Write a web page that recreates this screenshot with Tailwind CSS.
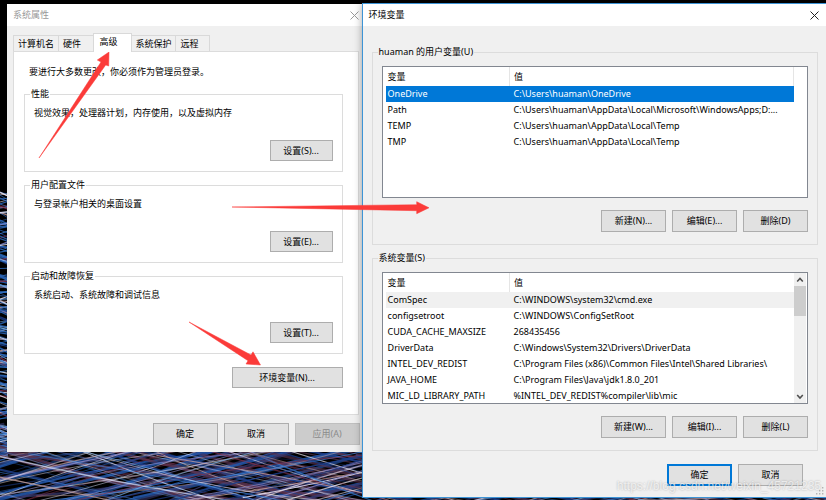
<!DOCTYPE html>
<html lang="zh-CN">
<head>
  <meta charset="UTF-8" />
  <meta name="viewport" content="width=device-width, initial-scale=1.0"/>
  <script src="https://cdn.jsdelivr.net/npm/@tailwindcss/browser@4"></script>
  <style>
    body {
      font-family: 'Noto Sans', 'Noto Sans CJK SC', sans-serif;
    }
  </style>
  <title>环境变量</title>
</head>
<body class="bg-black text-black text-[9px] leading-[14px]">
  <div class="relative min-h-screen overflow-hidden">
    <!-- ============================ WALLPAPER ============================ -->
    <svg id="wallpaper" class="absolute inset-0 h-full w-full" viewBox="0 0 826 500" preserveAspectRatio="none" fill="none" aria-hidden="true"></svg>

    <main class="relative flex items-start pt-[3px] pl-[7px]">
      <!-- ============================ SYSTEM PROPERTIES ============================ -->
      <section class="mt-px min-w-0 flex-[355] bg-[#f0f0f0]">
        <header class="flex h-[22px] items-center justify-between bg-white pr-[3px] pl-[6px] text-[#999]">
          <h1>系统属性</h1>
          <button aria-label="关闭系统属性">
            <svg class="h-[9px] w-[9px]" viewBox="0 0 9 9" fill="none" stroke="#999"><path d="M.5 .5l8 8M8.5 .5l-8 8"/></svg>
          </button>
        </header>
        <div class="pt-[7px] pr-[3px] pl-[6px]">
          <nav class="flex h-[18px] items-end">
            <button class="h-4 w-[46px] border border-b-0 border-[#d9d9d9]">计算机名</button>
            <button class="h-4 w-[34px] border-t border-[#d9d9d9] pr-2">硬件</button>
            <button class="z-10 -mb-px h-[19px] w-[39px] border border-b-0 border-[#d9d9d9] bg-white pr-2 pb-[2px]">高级</button>
            <button class="h-4 w-[44px] border-t border-r border-[#d9d9d9]">系统保护</button>
            <button class="h-4 w-[34px] border border-b-0 border-l-0 border-[#d9d9d9] pr-[6px]">远程</button>
          </nav>
          <div class="flex flex-col gap-[6px] border border-[#dcdcdc] bg-white pt-[13px] pr-[15px] pb-[26px] pl-[10px]">
            <p class="mb-[2px] pl-[5px]">要进行大多数更改，你必须作为管理员登录。</p>
            <fieldset class="border border-[#dcdcdc] px-[9px] pb-[10px]">
              <legend class="-ml-1 px-px">性能</legend>
              <p class="pt-[5px]">视觉效果，处理器计划，内存使用，以及虚拟内存</p>
              <div class="mt-5 flex justify-end">
                <button class="h-[21px] w-[63px] border border-[#adadad] bg-[#e1e1e1]">设置(S)...</button>
              </div>
            </fieldset>
            <fieldset class="border border-[#dcdcdc] px-[9px] pb-[10px]">
              <legend class="-ml-1 px-px">用户配置文件</legend>
              <p class="pt-[5px]">与登录帐户相关的桌面设置</p>
              <div class="mt-5 flex justify-end">
                <button class="h-[21px] w-[63px] border border-[#adadad] bg-[#e1e1e1]">设置(E)...</button>
              </div>
            </fieldset>
            <fieldset class="border border-[#dcdcdc] px-[9px] pb-[10px]">
              <legend class="-ml-1 px-px">启动和故障恢复</legend>
              <p class="pt-[5px]">系统启动、系统故障和调试信息</p>
              <div class="mt-5 flex justify-end">
                <button class="h-[21px] w-[63px] border border-[#adadad] bg-[#e1e1e1]">设置(T)...</button>
              </div>
            </fieldset>
            <button class="mt-[7px] h-[21px] w-[111px] self-end border border-[#adadad] bg-[#e1e1e1]">环境变量(N)...</button>
          </div>
        </div>
        <footer class="flex justify-end gap-[6px] pt-[8px] pr-[2px] pb-[7px]">
          <button class="h-[22px] w-[65px] border border-[#adadad] bg-[#e1e1e1]">确定</button>
          <button class="h-[22px] w-[65px] border border-[#adadad] bg-[#e1e1e1]">取消</button>
          <button class="h-[22px] w-[65px] border border-[#bfbfbf] bg-[#ccc] text-[#8a8a8a]" disabled>应用(A)</button>
        </footer>
      </section>

      <!-- ============================ ENVIRONMENT VARIABLES ============================ -->
      <section class="relative min-w-0 flex-[464] border border-r-0 border-[#3d94d6] bg-[#f0f0f0] shadow-[0_0_8px_rgba(0,0,0,0.35)]">
        <header class="flex h-[22px] items-center justify-between bg-white pr-[7px] pl-[6px]">
          <h1>环境变量</h1>
          <button aria-label="关闭环境变量">
            <svg class="h-[9px] w-[9px]" viewBox="0 0 9 9" fill="none" stroke="#222"><path d="M.5 .5l8 8M8.5 .5l-8 8"/></svg>
          </button>
        </header>
        <div class="flex flex-col gap-[6px] pt-[19px] pr-2 pl-[9px]">
          <fieldset class="min-w-0 border border-[#dcdcdc] px-[9px] pb-3">
            <legend class="-ml-1 px-px">huaman 的用户变量(U)</legend>
            <div class="mt-[7px] flex h-[132px] overflow-hidden border border-[#828790] bg-white pr-[13px] pl-[3px]">
              <table class="h-fit w-full table-fixed border-collapse text-left">
                <thead>
                  <tr class="h-[19px]">
                    <th class="w-[124px] border-r border-[#e5e5e5] pl-[2px] font-normal">变量</th>
                    <th class="border-r border-[#e5e5e5] pl-1 font-normal">值</th>
                  </tr>
                </thead>
                <tbody>
                  <tr class="h-4 bg-[#0078d7] text-white"><td class="p-0 pl-[2px]">OneDrive</td><td class="p-0 pl-1">C:\Users\huaman\OneDrive</td></tr>
                  <tr class="h-4"><td class="p-0 pl-[2px]">Path</td><td class="p-0 pl-1 whitespace-nowrap">C:\Users\huaman\AppData\Local\Microsoft\WindowsApps;D:...</td></tr>
                  <tr class="h-4"><td class="p-0 pl-[2px]">TEMP</td><td class="p-0 pl-1">C:\Users\huaman\AppData\Local\Temp</td></tr>
                  <tr class="h-4"><td class="p-0 pl-[2px]">TMP</td><td class="p-0 pl-1">C:\Users\huaman\AppData\Local\Temp</td></tr>
                </tbody>
              </table>
            </div>
            <div class="mt-3 flex justify-end gap-[6px]">
              <button class="h-[22px] w-[65px] border border-[#adadad] bg-[#e1e1e1]">新建(N)...</button>
              <button class="h-[22px] w-[65px] border border-[#adadad] bg-[#e1e1e1]">编辑(E)...</button>
              <button class="h-[22px] w-[65px] border border-[#adadad] bg-[#e1e1e1]">删除(D)</button>
            </div>
          </fieldset>
          <fieldset class="min-w-0 border border-[#dcdcdc] px-[9px] pb-3">
            <legend class="-ml-1 px-px">系统变量(S)</legend>
            <div class="mt-[7px] flex h-[132px] overflow-hidden border border-[#828790] bg-white pr-px pl-[3px]">
              <table class="h-fit min-w-0 flex-1 table-fixed border-collapse text-left">
                <thead>
                  <tr class="h-[19px]">
                    <th class="w-[124px] border-r border-[#e5e5e5] pl-[2px] font-normal">变量</th>
                    <th class="pl-1 font-normal">值</th>
                  </tr>
                </thead>
                <tbody>
                  <tr class="h-4 bg-[#f0f0f0]"><td class="p-0 pl-[2px]">ComSpec</td><td class="p-0 pl-1">C:\WINDOWS\system32\cmd.exe</td></tr>
                  <tr class="h-4"><td class="p-0 pl-[2px]">configsetroot</td><td class="p-0 pl-1">C:\WINDOWS\ConfigSetRoot</td></tr>
                  <tr class="h-4"><td class="p-0 pl-[2px]">CUDA_CACHE_MAXSIZE</td><td class="p-0 pl-1">268435456</td></tr>
                  <tr class="h-4"><td class="p-0 pl-[2px]">DriverData</td><td class="p-0 pl-1">C:\Windows\System32\Drivers\DriverData</td></tr>
                  <tr class="h-4"><td class="p-0 pl-[2px]">INTEL_DEV_REDIST</td><td class="p-0 pl-1 whitespace-nowrap">C:\Program Files (x86)\Common Files\Intel\Shared Libraries\</td></tr>
                  <tr class="h-4"><td class="p-0 pl-[2px]">JAVA_HOME</td><td class="p-0 pl-1">C:\Program Files\Java\jdk1.8.0_201</td></tr>
                  <tr class="h-4"><td class="p-0 pl-[2px]">MIC_LD_LIBRARY_PATH</td><td class="p-0 pl-1">%INTEL_DEV_REDIST%compiler\lib\mic</td></tr>
                </tbody>
              </table>
              <div class="flex w-3 flex-col items-center bg-[#f0f0f0]">
                <svg class="h-[13px] w-3" viewBox="0 0 12 13" fill="none" stroke="#505050" stroke-width="1.6"><path d="M3.2 8.5L6 5.5l2.8 3"/></svg>
                <div class="h-[30px] w-full bg-[#cdcdcd]"></div>
                <svg class="mt-auto h-[13px] w-3" viewBox="0 0 12 13" fill="none" stroke="#505050" stroke-width="1.6"><path d="M3.2 5L6 8l2.8-3"/></svg>
              </div>
            </div>
            <div class="mt-3 flex justify-end gap-[6px]">
              <button class="h-[22px] w-[65px] border border-[#adadad] bg-[#e1e1e1]">新建(W)...</button>
              <button class="h-[22px] w-[65px] border border-[#adadad] bg-[#e1e1e1]">编辑(I)...</button>
              <button class="h-[22px] w-[65px] border border-[#adadad] bg-[#e1e1e1]">删除(L)</button>
            </div>
          </fieldset>
        </div>
        <footer class="flex justify-end gap-[6px] pt-[13px] pr-[23px] pb-[11px]">
          <button class="h-[22px] w-[65px] border-2 border-[#0078d7] bg-[#e1e1e1]">确定</button>
          <button class="h-[22px] w-[65px] border border-[#adadad] bg-[#e1e1e1]">取消</button>
        </footer>
        <svg class="absolute right-[2px] bottom-[2px] h-2 w-2" viewBox="0 0 8 8" fill="#b4b4b4" aria-hidden="true">
          <path d="M6 0h1.4v1.4H6zM3 3h1.4v1.4H3zM6 3h1.4v1.4H6zM0 6h1.4v1.4H0zM3 6h1.4v1.4H3zM6 6h1.4v1.4H6z"/>
        </svg>
      </section>
    </main>

    <!-- Arrows -->
    <svg class="pointer-events-none absolute top-0 left-0 h-[500px] w-[826px]" viewBox="0 0 826 500" fill="#fb3b39" stroke="#fb3b39" stroke-width=".5" aria-hidden="true">
      <path d="M39 158L101 62L97.300 60L109 52L108.700 66L105.700 65Z"/>
      <path d="M232 207L416.700 204.700V201.700L429 207.800L416.700 213.700V210.700Z"/>
      <path d="M189 322L251 355L253 351.800L260.500 365L246 364L248 360.700Z"/>
    </svg>

    <p class="pointer-events-none absolute right-[5px] bottom-[5px] font-['Liberation_Sans'] text-[12px] leading-[18px] text-white/70 [text-shadow:0_0_2px_rgba(0,0,0,0.3)]">https://blog.csdn.net/weixin_45721235</p>
  </div>

  <script>
    // Light trails on the desktop
    const wallpaper = document.getElementById('wallpaper');
    const colors = ['#dfe6ff', '#3f7fd0', '#2456a8', '#c9a3a0', '#7fb6ee', '#8f8ac8', '#1d3f8c', '#f2e9f2', '#803048'];
    let seed = 7;
    function random() {
      seed = (seed * 16807) % 2147483647;
      return seed / 2147483647;
    }

    let trails = '';
    // edge strip, nearly level strokes that start under the dark sky
    for (let i = 0; i < 210; i++) {
      const y = 192 + random() * 270;
      const slope = (random() - 0.4) * 8;
      const color = i % 2 ? '#2f6fc4' : colors[i % 9];
      trails += `<path d="M0 ${y}L8 ${y + slope}" stroke="${color}" stroke-width="${0.6 + random()}" opacity="0.8"/>`;
    }
    // crossing sweeps along the bottom
    for (let i = 0; i < 250; i++) {
      const x = -300 + random() * 1050;
      const up = i % 2 ? 1 : -1;
      const span = 260 + random() * 160;
      const y = 476 + up * (20 + random() * 45);
      const bend = (random() - 0.5) * 60;
      // dim wide strokes first, bright thin ones over them
      const width = i < 110 ? 1.2 + random() * 1.8 : 0.5 + random() * 0.8;
      const color = i < 110 ? ['#1d3f8c', '#2456a8', '#5a3450', '#3a3a70'][i % 4] : colors[i % 9];
      trails += `<path d="M${x} ${y}Q${x + span / 2} ${476 + bend} ${x + span} ${476 - up * (25 + random() * 40)}" stroke="${color}" stroke-width="${width}" opacity="${0.5 + random() * 0.4}"/>`;
    }
    wallpaper.innerHTML = trails;
  </script>
</body>
</html>
